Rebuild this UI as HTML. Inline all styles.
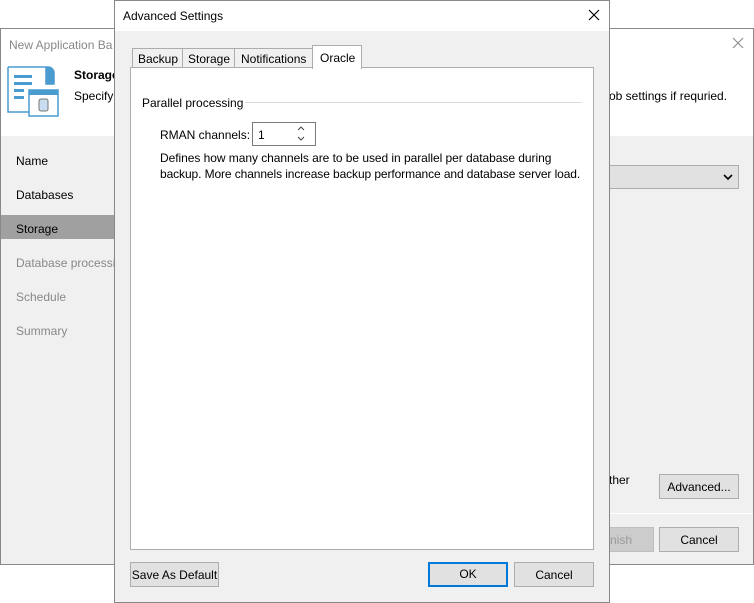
<!DOCTYPE html>
<html><head><style>
*{margin:0;padding:0;box-sizing:border-box}
body{width:754px;height:603px;background:#fff;position:relative;overflow:hidden;font-family:"Liberation Sans",sans-serif;font-size:12px;color:#000}
.a{position:absolute}
.btn{position:absolute;background:#e1e1e1;border:1px solid #adadad;text-align:center;line-height:24px;font-size:12px}
.t{position:absolute;white-space:nowrap;line-height:14px}
</style></head><body>
<div class="a" style="left:0;top:28px;width:754px;height:537px;border:1px solid #888;background:#f0f0f0"></div>
<div class="a" style="left:1px;top:29px;width:752px;height:107px;background:#fff"></div>
<div class="t" style="left:9px;top:38px;color:#888">New Application Ba</div>
<svg class="a" style="left:732px;top:37px" width="12" height="12"><path d="M1 1 L11 11 M11 1 L1 11" stroke="#888" stroke-width="1"/></svg>
<svg class="a" style="left:6px;top:64px" width="54" height="54" viewBox="0 0 54 54">
<path d="M2 3 H42 A6 6 0 0 1 48 9 V20 H40 V3 M2 3 V48 H24" fill="#fff" stroke="#4a9bd0" stroke-width="1.5"/>
<path d="M40 3 A6 6 0 0 1 48 9 V20 H40 Z" fill="#4a9bd0"/>
<rect x="8" y="11" width="18" height="3" fill="#4a9bd0"/><rect x="8" y="18" width="18" height="3" fill="#4a9bd0"/><rect x="8" y="25" width="10" height="3" fill="#4a9bd0"/><rect x="8" y="32" width="10" height="3" fill="#4a9bd0"/>
<rect x="23" y="26" width="29" height="26" fill="#fff" stroke="#4a9bd0" stroke-width="1.5"/>
<rect x="23" y="26" width="29" height="5" fill="#4a9bd0"/>
<rect x="33" y="35" width="9" height="12" rx="2" fill="#c8ddef" stroke="#777"/>
</svg>
<div class="t" style="left:74px;top:68px;font-weight:bold">Storage</div>
<div class="t" style="left:74px;top:89px">Specify</div>
<div class="t" style="left:609px;top:89px">ob settings if requried.</div>
<div class="t" style="left:16px;top:154px">Name</div>
<div class="t" style="left:16px;top:188px">Databases</div>
<div class="a" style="left:1px;top:215px;width:113px;height:24px;background:#a0a0a0"></div>
<div class="t" style="left:16px;top:222px">Storage</div>
<div class="t" style="left:16px;top:256px;color:#888">Database processing</div>
<div class="t" style="left:16px;top:290px;color:#888">Schedule</div>
<div class="t" style="left:16px;top:324px;color:#888">Summary</div>
<div class="a" style="left:609px;top:165px;width:130px;height:24px;background:#e1e1e1;border:1px solid #adadad"></div>
<svg class="a" style="left:723px;top:174px" width="10" height="7"><path d="M1 1 L5 5 L9 1" fill="none" stroke="#000" stroke-width="1.6"/></svg>
<div class="t" style="left:609px;top:473px">ther</div>
<div class="btn" style="left:659px;top:474px;width:80px;height:25px">Advanced...</div>
<div class="a" style="left:609px;top:513px;width:144px;height:1px;background:#fff"></div>
<div class="btn" style="left:609px;top:527px;width:45px;height:25px;background:#ccc;border-color:#bfbfbf;color:#999;text-align:left">nish</div>
<div class="btn" style="left:659px;top:527px;width:80px;height:25px">Cancel</div>
<div class="a" style="left:114px;top:0;width:496px;height:603px;border:1px solid #888;background:#f0f0f0"></div>
<div class="a" style="left:115px;top:1px;width:494px;height:30px;background:#fff"></div>
<div class="t" style="left:123px;top:9px">Advanced Settings</div>
<svg class="a" style="left:588px;top:9px" width="12" height="12"><path d="M1 1 L11 11 M11 1 L1 11" stroke="#000" stroke-width="1.2"/></svg>
<div class="a" style="left:130px;top:67px;width:464px;height:483px;background:#fff;border:1px solid #adadad"></div>
<div class="a" style="left:132px;top:48px;width:51px;height:20px;border:1px solid #adadad;background:#f0f0f0"></div><div class="t" style="left:138px;top:52px">Backup</div>
<div class="a" style="left:182px;top:48px;width:53px;height:20px;border:1px solid #adadad;background:#f0f0f0"></div><div class="t" style="left:188px;top:52px">Storage</div>
<div class="a" style="left:234px;top:48px;width:79px;height:20px;border:1px solid #adadad;background:#f0f0f0"></div><div class="t" style="left:241px;top:52px">Notifications</div>
<div class="a" style="left:312px;top:45px;width:50px;height:24px;border:1px solid #adadad;border-bottom:none;background:#fff"></div><div class="t" style="left:320px;top:51px">Oracle</div>
<div class="t" style="left:142px;top:96px">Parallel processing</div>
<div class="a" style="left:245px;top:102px;width:337px;height:1px;background:#dcdcdc"></div>
<div class="t" style="left:160px;top:128px">RMAN channels:</div>
<div class="a" style="left:252px;top:122px;width:64px;height:24px;border:1px solid #7a7a7a;background:#fff"></div>
<div class="t" style="left:258px;top:128px">1</div>
<svg class="a" style="left:295px;top:124px" width="12" height="20"><path d="M3 6 L6 3 L9 6 M3 13 L6 16 L9 13" fill="none" stroke="#444" stroke-width="1"/></svg>
<div class="t" style="left:160px;top:151px;letter-spacing:-0.05px">Defines how many channels are to be used in parallel per database during</div>
<div class="t" style="left:160px;top:167px;letter-spacing:-0.1px">backup. More channels increase backup performance and database server load.</div>
<div class="btn" style="left:130px;top:562px;width:89px;height:25px">Save As Default</div>
<div class="btn" style="left:428px;top:562px;width:80px;height:25px;border:2px solid #0078d7;line-height:21px">OK</div>
<div class="btn" style="left:514px;top:562px;width:80px;height:25px">Cancel</div>
</body></html>
